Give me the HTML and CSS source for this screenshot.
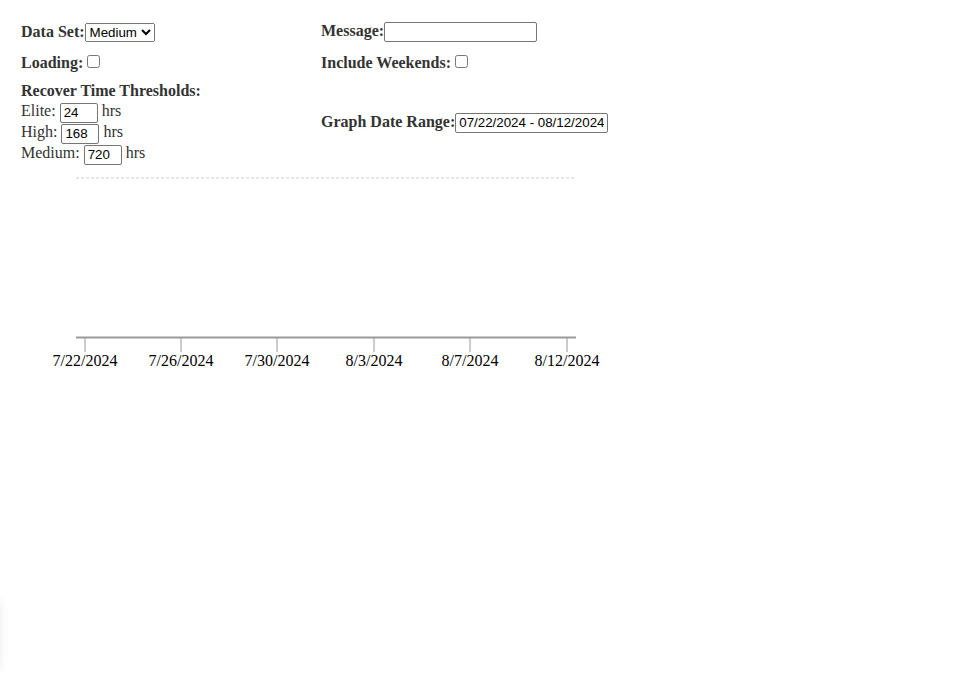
FILE: index.html
```html
<!DOCTYPE html>
<html>
<head>
<meta charset="utf-8">
<link rel="stylesheet" href="styles.css">
</head>
<body>
<div class="page">
  <div class="controls">
    <div class="field"><label class="lbl">Data Set:</label><select class="sel"><option>Medium</option></select></div>
    <div class="field"><label class="lbl">Message:</label><input type="text" class="txt"></div>
    <div class="field"><label class="lbl">Loading:</label><input type="checkbox" class="chk"></div>
    <div class="field"><label class="lbl">Include Weekends:</label><input type="checkbox" class="chk"></div>
    <div class="field thresholds">
      <div class="lbl">Recover Time Thresholds:</div>
      <div class="thr">Elite: <input type="text" class="num" value="24"> hrs</div>
      <div class="thr">High: <input type="text" class="num" value="168"> hrs</div>
      <div class="thr">Medium: <input type="text" class="num" value="720"> hrs</div>
    </div>
    <div class="field"><label class="lbl">Graph Date Range:</label><input type="text" class="txt" value="07/22/2024 - 08/12/2024"></div>
  </div>
  <svg class="chart" width="600" height="210" viewBox="0 0 600 210">
    <line class="grid" x1="55" y1="10" x2="555" y2="10"></line>
    <line class="axis" x1="55" y1="169.5" x2="555" y2="169.5"></line>
    <g class="ticks">
      <line x1="64" y1="170" x2="64" y2="184"></line>
      <line x1="160" y1="170" x2="160" y2="184"></line>
      <line x1="256" y1="170" x2="256" y2="184"></line>
      <line x1="353" y1="170" x2="353" y2="184"></line>
      <line x1="449" y1="170" x2="449" y2="184"></line>
      <line x1="546" y1="170" x2="546" y2="184"></line>
    </g>
    <g class="labels">
      <text x="64" y="198">7/22/2024</text>
      <text x="160" y="198">7/26/2024</text>
      <text x="256" y="198">7/30/2024</text>
      <text x="353" y="198">8/3/2024</text>
      <text x="449" y="198">8/7/2024</text>
      <text x="546" y="198">8/12/2024</text>
    </g>
  </svg>
</div>
<div class="edge-shadow"></div>
</body>
</html>
```

FILE: styles.css
```css
html, body {
  margin: 0;
  padding: 0;
  background: #fff;
}
body {
  font-family: "Liberation Serif", "Times New Roman", serif;
  font-size: 16px;
  color: #000;
}
.page {
  padding: 22px 21px 0 21px;
}
.controls {
  display: grid;
  grid-template-columns: 300px 300px;
  align-items: center;
  row-gap: 10px;
}
.lbl {
  font-weight: bold;
  color: #333;
}
.sel {
  font-family: "Liberation Sans", Arial, sans-serif;
  font-size: 13.33px;
}
.txt {
  font-family: "Liberation Sans", Arial, sans-serif;
  font-size: 13.33px;
  box-sizing: border-box;
  width: 153px;
  height: 20px;
  padding: 1px 3px;
  border: 1px solid #767676;
  border-radius: 2px;
  margin: 0;
  vertical-align: middle;
}
.chk {
  margin: 3px 3px 3px 4px;
}
.thr {
  color: #333;
  line-height: 21px;
  height: 21px;
}
.num {
  font-family: "Liberation Sans", Arial, sans-serif;
  font-size: 13.33px;
  box-sizing: border-box;
  width: 38px;
  height: 20px;
  padding: 1px 3px;
  border: 1px solid #767676;
  border-radius: 2px;
  margin: 0;
  vertical-align: middle;
}
.chart {
  display: block;
  margin-top: 5px;
}
.grid {
  stroke: #ccc;
  stroke-width: 1;
  stroke-dasharray: 3 2;
}
.axis {
  stroke: #999;
  stroke-width: 2;
}
.ticks line {
  stroke: #999;
  stroke-width: 1;
}
.labels text {
  font-family: "Liberation Serif", "Times New Roman", serif;
  font-size: 16px;
  text-anchor: middle;
  fill: #000;
}
.edge-shadow {
  position: absolute;
  left: -12px;
  top: 600px;
  width: 12px;
  height: 70px;
  box-shadow: 0 0 10px rgba(0,0,0,0.08);
}
```
